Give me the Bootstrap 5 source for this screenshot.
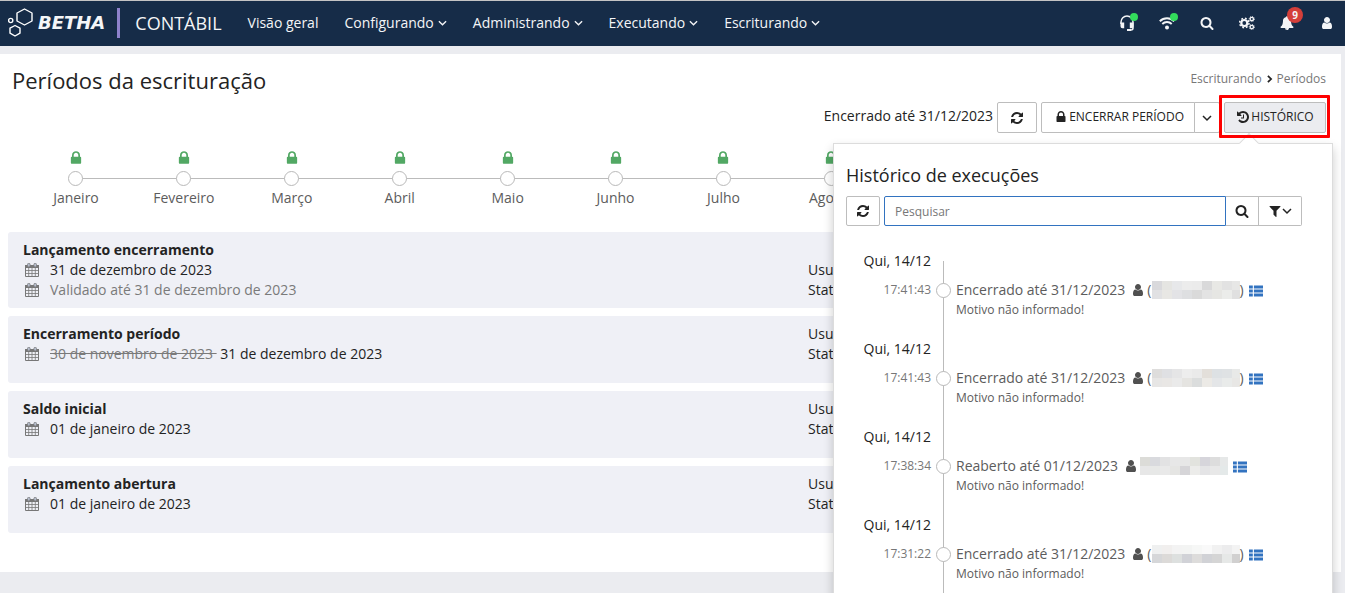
<!DOCTYPE html>
<html lang="pt-BR">
<head>
<meta charset="utf-8">
<meta name="viewport" content="width=device-width, initial-scale=1">
<title>Períodos da escrituração</title>
<link href="https://cdn.jsdelivr.net/npm/bootstrap@5.3.0/dist/css/bootstrap.min.css" rel="stylesheet">
<style>
  body { font-family: "Open Sans", "Noto Sans", sans-serif; font-size: 14px; line-height: 20px; color: #232323; background: #ebecf0; height: 100vh; overflow: hidden; }
  .ico { width: 14px; height: 14px; fill: currentColor; flex: none; display: block; }
  .topbar { background: #162c48; border-top: 1px solid #c4c4c4; height: 46px; padding-bottom: 2px; }
  .topbar a, .topbar button { color: #f4f5f7; text-decoration: none; }
  .brand-word { font-family: "DejaVu Sans", sans-serif; font-size: 18px; font-weight: 700; font-style: italic; }
  .brand-rule { width: 3px; height: 30px; background: #8e82cc; margin: 0 15px 0 12px; }
  .product { font-size: 18px; margin-right: 26px; }
  .menu { gap: 26px; }
  .tools { gap: 24px; margin-right: 10px; }
  .tool { width: 16px; height: 24px; }
  .dot { position: absolute; top: 2px; right: -3px; width: 8px; height: 8px; border-radius: 50%; background: #33dc5c; }
  .count { position: absolute; top: -4px; right: -8px; width: 16px; height: 16px; border-radius: 50%; background: #d43f3a; font-size: 10px; line-height: 16px; font-weight: 700; }
  .page { margin: 8px 4px 0 0; padding: 11px 8px 39px; }
  .page-title { font-size: 22px; line-height: 30px; font-weight: 400; margin-left: 4px; }
  .crumbs { font-size: 12px; margin: 8px 7px 0 0; gap: 3px; }
  .crumbs a { color: #777; text-decoration: none; }
  .actions { padding: 7px 7px 0 0; gap: 4px; }
  .tbtn { height: 31px; border: 1px solid #bdbdbd; border-radius: 2px; background: #fff; color: #232323; font-size: 12px; line-height: 20px; padding: 0 10px 0 12px; display: inline-flex; align-items: center; justify-content: center; gap: 1px; }
  .label { padding-bottom: 2px; }
  .sq { width: 40px; padding: 0; }
  .caret-btn { width: 26px; padding: 0; margin-left: -1px; }
  .hist { width: 102px; padding: 0 0 2px; background: #ebecf0; }
  .marker::after { content: ""; position: absolute; inset: -7px -4px -5px -5px; border: 3px solid #fe0000; border-radius: 1px; z-index: 30; pointer-events: none; }
  .months { padding: 15px 16px 24px 14px; color: #5c5c5c; }
  .month { flex: 1 1 0; min-width: 0; }
  .month .ico { width: 16px; height: 16px; margin: 2px auto; color: #52a864; }
  .step { height: 20px; }
  .step::before { content: ""; position: absolute; left: 0; right: 0; top: 10px; height: 1px; background: #bbb; }
  .month:first-child .step::before { left: 50%; }
  .month:last-child .step::before { right: 50%; }
  .ring { width: 15px; height: 15px; border: 1px solid #b9b9b9; border-radius: 50%; background: #fff; position: relative; }
  .entries { gap: 8px; }
  .entry { display: grid; grid-template-columns: 1fr 510px; background: #eff0f6; border-radius: 3px; padding: 8px 15px; min-height: 67px; }
  .entry h2 { font-size: 14px; line-height: 20px; font-weight: 700; margin: 0; }
  .when { display: flex; align-items: center; gap: 11px; }
  .when .ico { color: #777; margin-left: 2px; }
  .muted { color: #7a7a7a; }
  .history { position: absolute; top: 41px; right: -7px; width: 500px; height: 480px; background: #fff; border: 1px solid #dcdcdc; box-shadow: 0 5px 10px rgba(0,0,0,.2); z-index: 20; padding: 20px 12px; }
  .history::before { content: ""; position: absolute; top: -8px; right: 76px; width: 14px; height: 14px; background: #fff; border: solid #dcdcdc; border-width: 1px 0 0 1px; transform: rotate(45deg); }
  .history h2 { font-size: 18px; line-height: 22px; font-weight: 400; margin-bottom: 10px; }
  .finder { width: 456px; }
  .finder .tbtn { height: 30px; padding: 0; }
  .finder input { height: 30px; border: 1px solid #3273c0; border-radius: 2px 0 0 2px; font-size: 12px; padding: 0 10px; box-shadow: none; outline: 0; min-width: 0; }
  .finder input::placeholder { color: #777; }
  .w33 { width: 33px; } .w34 { width: 34px; } .w43 { width: 43px; }
  .log { margin: 25px 0 0; padding: 0; list-style: none; }
  .log li { display: grid; grid-template-columns: 85px 25px 1fr; grid-template-rows: 20px 9px 20px 20px; height: 88px; }
  .day { grid-area: 1 / 1; text-align: right; }
  .hour { grid-area: 3 / 1; text-align: right; font-size: 12px; color: #777; }
  .rail { grid-area: 1 / 2 / 5 / 3; display: flex; justify-content: center; align-items: flex-start; position: relative; height: 88px; }
  .rail::before { content: ""; position: absolute; left: 12px; top: 0; bottom: 0; width: 1px; background: #bbb; }
  .log li:first-child .rail::before { top: 10px; }
  .rail .ring { margin-top: 32px; }
  .what { grid-area: 3 / 3; color: #5c5c5c; display: flex; align-items: center; }
  .what .ico { color: #505050; margin: 0 2px 0 6px; }
  .what a .ico { color: #3273c0; margin: 2px 0 0 5px; height: 12px; }
  .why { grid-area: 4 / 3; font-size: 12px; color: #5c5c5c; }
  .mosaic { display: grid; grid-template-columns: repeat(8, 10px) 8px; grid-auto-rows: 9px; }
</style>
</head>
<body>
<svg class="d-none" xmlns="http://www.w3.org/2000/svg">
  <symbol id="lock" viewBox="0 0 1792 1792"><path d="M640 768h512v-192q0-106-75-181t-181-75-181 75-75 181v192zm832 96v576q0 40-28 68t-68 28h-960q-40 0-68-28t-28-68v-576q0-40 28-68t68-28h32v-192q0-184 132-316t316-132 316 132 132 316v192h32q40 0 68 28t28 68z"/></symbol>
  <symbol id="refresh" viewBox="0 0 1792 1792"><path d="M1639 1056q0 5-1 7-64 268-268 434.500t-478 166.500q-146 0-282.500-55t-243.500-157l-129 129q-19 19-45 19t-45-19-19-45v-448q0-26 19-45t45-19h448q26 0 45 19t19 45-19 45l-137 137q71 66 161 102t187 36q134 0 250-65t186-179q11-17 53-117 8-23 30-23h192q13 0 22.500 9.500t9.500 22.500zm25-800v448q0 26-19 45t-45 19h-448q-26 0-45-19t-19-45 19-45l138-138q-148-137-349-137-134 0-250 65t-186 179q-11 17-53 117-8 23-30 23h-199q-13 0-22.500-9.500t-9.500-22.500v-7q65-268 270-434.500t480-166.500q146 0 284 55.500t245 156.500l130-129q19-19 45-19t45 19 19 45z"/></symbol>
  <symbol id="history" viewBox="0 0 1792 1792"><path d="M1664 896q0 156-61 298t-164 245-245 164-298 61q-172 0-327-72.500t-264-204.500q-7-10-6.500-22.500t8.500-20.500l137-138q10-9 25-9 16 2 23 12 73 95 179 147t225 52q104 0 198.500-40.500t163.500-109.500 109.500-163.500 40.500-198.500-40.500-198.500-109.500-163.500-163.500-109.500-198.500-40.500q-98 0-188 35.500t-160 101.500l137 138q31 30 14 69-17 40-59 40h-448q-26 0-45-19t-19-45v-448q0-42 40-59 39-17 69 14l130 129q107-101 244.500-156.500t284.500-55.500q156 0 298 61t245 164 164 245 61 298zm-640-288v448q0 14-9 23t-23 9h-320q-14 0-23-9t-9-23v-64q0-14 9-23t23-9h224v-352q0-14 9-23t23-9h64q14 0 23 9t9 23z"/></symbol>
  <symbol id="search" viewBox="0 0 1792 1792"><path d="M1216 832q0-185-131.500-316.500t-316.500-131.500-316.500 131.500-131.500 316.500 131.500 316.500 316.500 131.500 316.500-131.500 131.500-316.500zm512 832q0 52-38 90t-90 38q-54 0-90-38l-343-342q-179 124-399 124-143 0-273.500-55.500t-225-150-150-225-55.500-273.500 55.500-273.500 150-225 225-150 273.500-55.500 273.500 55.500 225 150 150 225 55.500 273.500q0 220-124 399l343 343q37 37 37 90z"/></symbol>
  <symbol id="filter" viewBox="0 0 1792 1792"><path d="M1595 295q17 41-14 70l-493 493v742q0 42-40 59-13 5-25 5-27 0-45-19l-256-256q-19-19-19-45v-486l-493-493q-31-29-14-70 17-39 59-39h1280q42 0 59 39z"/></symbol>
  <symbol id="user" viewBox="0 0 1792 1792"><path d="M1536 1399q0 109-62.500 187t-150.500 78h-854q-88 0-150.500-78t-62.500-187q0-85 8.500-160.500t31.500-152 58.500-131 94-89 134.500-34.500q131 128 313 128t313-128q76 0 134.500 34.500t94 89 58.500 131 31.500 152 8.500 160.500zm-256-887q0 159-112.500 271.500t-271.500 112.500-271.500-112.500-112.500-271.500 112.500-271.500 271.500-112.500 271.500 112.500 112.500 271.500z"/></symbol>
  <symbol id="bell" viewBox="0 0 1792 1792"><path d="M912 1696q0-16-16-16-59 0-101.500-42.500t-42.500-101.500q0-16-16-16t-16 16q0 73 51.500 124.500t124.500 51.500q16 0 16-16zm816-288q0 52-38 90t-90 38h-448q0 106-75 181t-181 75-181-75-75-181h-448q-52 0-90-38t-38-90q50-42 91-88t85-119.500 74.500-158.500 50-206 19.500-260q0-152 117-282.500t307-158.500q-8-19-8-39 0-40 28-68t68-28 68 28 28 68q0 20-8 39 190 28 307 158.500t117 282.500q0 139 19.500 260t50 206 74.500 158.500 85 119.500 91 88z"/></symbol>
  <symbol id="down" viewBox="0 0 10 10"><path d="M1 3l4 4 4-4" fill="none" stroke="currentColor" stroke-width="1.500"/></symbol>
  <symbol id="right" viewBox="0 0 10 10"><path d="M3 1l4 4-4 4" fill="none" stroke="currentColor" stroke-width="2.200"/></symbol>
  <symbol id="list" viewBox="0 0 14 12"><path d="M0 .6h3.800v2.800H0zM4.900 .6H14v2.800H4.900zM0 4.600h3.800v2.800H0zM4.900 4.600H14v2.800H4.900zM0 8.600h3.800v2.800H0zM4.900 8.600H14v2.800H4.900z"/></symbol>
  <symbol id="calendar" viewBox="0 0 14 14"><path fill="none" stroke="currentColor" d="M.5 2.500h13v11H.5z"/><path fill="none" stroke="currentColor" stroke-width=".8" d="M3.700 4v9.500M7 4v9.500M10.300 4v9.500M.5 7.500h13M.5 10.500h13"/><path d="M0 2h14v3H0z"/><rect x="2.500" y=".3" width="2.600" height="3.700" rx="1.200" fill="#b5bccb" stroke="currentColor" stroke-width=".7"/><rect x="8.900" y=".3" width="2.600" height="3.700" rx="1.200" fill="#b5bccb" stroke="currentColor" stroke-width=".7"/></symbol>
  <symbol id="wifi" viewBox="0 0 16 14"><g fill="none" stroke="currentColor" stroke-width="1.900"><path d="M.8 5.200a10.300 10.300 0 0 1 14.400 0M3.300 8a6.700 6.700 0 0 1 9.400 0"/></g><circle cx="8" cy="11.500" r="2"/></symbol>
  <symbol id="headset" viewBox="0 0 14 16"><path d="M1 9V7a6 6 0 0 1 12 0v6q0 2-2 2H8" fill="none" stroke="currentColor" stroke-width="1.500"/><path d="M.5 7.500h3.700v5.700H2.500q-2 0-2-2zM9.800 7.500h3.700v3.700q0 2-2 2H9.800zM7 14h4v2H7z"/></symbol>
  <symbol id="cogs" viewBox="0 0 16 14"><g fill="none" stroke="currentColor"><circle cx="5.300" cy="7" r="3" stroke-width="2.200"/><circle cx="5.300" cy="7" r="4.700" stroke-width="1.500" stroke-dasharray="1.850 1.850"/><circle cx="12.800" cy="3" r="1.700" stroke-width="1.300"/><circle cx="12.800" cy="3" r="2.600" stroke-width=".9" stroke-dasharray="1 1.040"/><circle cx="12.800" cy="11" r="1.700" stroke-width="1.300"/><circle cx="12.800" cy="11" r="2.600" stroke-width=".9" stroke-dasharray="1 1.040"/></g></symbol>
</svg>

<nav class="topbar d-flex align-items-center" aria-label="Principal">
  <a href="#" class="d-flex align-items-center ps-2" aria-label="Betha">
    <svg width="26" height="30" viewBox="0 0 26 30" fill="none" stroke="#fff" stroke-width="1.400" stroke-linejoin="round"><path d="M16.500 1l7.500 4v8l-7.500 4L9 13V5zM7 17.500l5 2.700v5L7 28l-5-2.800v-5z"/><circle cx="2.700" cy="12.500" r="2.100"/></svg>
    <span class="brand-word ms-1">BETHA</span>
  </a>
  <span class="brand-rule"></span>
  <a href="#" class="product">CONTÁBIL</a>
  <div class="menu d-flex align-items-center">
    <a href="#">Visão geral</a>
    <a href="#" class="d-flex align-items-center gap-1">Configurando <svg class="ico" style="width:9px"><use href="#down"/></svg></a>
    <a href="#" class="d-flex align-items-center gap-1">Administrando <svg class="ico" style="width:9px"><use href="#down"/></svg></a>
    <a href="#" class="d-flex align-items-center gap-1">Executando <svg class="ico" style="width:9px"><use href="#down"/></svg></a>
    <a href="#" class="d-flex align-items-center gap-1">Escriturando <svg class="ico" style="width:9px"><use href="#down"/></svg></a>
  </div>
  <div class="tools d-flex align-items-center ms-auto">
    <button class="tool btn p-0 border-0 position-relative d-flex align-items-center justify-content-center" aria-label="Suporte"><svg class="ico" style="height:16px"><use href="#headset"/></svg><span class="dot"></span></button>
    <button class="tool btn p-0 border-0 position-relative d-flex align-items-center justify-content-center" aria-label="Conexão"><svg class="ico" style="width:16px"><use href="#wifi"/></svg><span class="dot"></span></button>
    <button class="tool btn p-0 border-0 d-flex align-items-center justify-content-center" aria-label="Pesquisar"><svg class="ico"><use href="#search"/></svg></button>
    <button class="tool btn p-0 border-0 d-flex align-items-center justify-content-center" aria-label="Configurações"><svg class="ico" style="width:16px"><use href="#cogs"/></svg></button>
    <button class="tool btn p-0 border-0 position-relative d-flex align-items-center justify-content-center" aria-label="Notificações"><svg class="ico"><use href="#bell"/></svg><span class="count">9</span></button>
    <button class="tool btn p-0 border-0 d-flex align-items-center justify-content-center" aria-label="Usuário"><svg class="ico"><use href="#user"/></svg></button>
  </div>
</nav>

<main class="page bg-white">
  <header class="d-flex justify-content-between align-items-start">
    <h1 class="page-title mb-0">Períodos da escrituração</h1>
    <div class="crumbs d-flex align-items-center"><a href="#" class="lh-1">Escriturando</a><svg class="ico" style="width:9px;height:8px"><use href="#right"/></svg><a href="#" class="lh-1">Períodos</a></div>
  </header>

  <div class="actions d-flex justify-content-end align-items-center">
    <span class="mb-1">Encerrado até 31/12/2023</span>
    <button class="tbtn sq" aria-label="Atualizar"><svg class="ico"><use href="#refresh"/></svg></button>
    <div class="d-flex">
      <button class="tbtn label rounded-end-0"><svg class="ico"><use href="#lock"/></svg>ENCERRAR PERÍODO</button>
      <button class="tbtn caret-btn rounded-start-0" aria-label="Mais opções"><svg class="ico" style="width:10px"><use href="#down"/></svg></button>
    </div>
    <div class="position-relative marker d-flex">
      <button class="tbtn hist"><svg class="ico"><use href="#history"/></svg>HISTÓRICO</button>
      <section class="history" aria-label="Histórico">
        <h2>Histórico de execuções</h2>
        <div class="finder d-flex">
          <button class="tbtn w34 me-1" aria-label="Atualizar histórico"><svg class="ico"><use href="#refresh"/></svg></button>
          <input class="flex-fill" type="text" placeholder="Pesquisar" aria-label="Pesquisar">
          <button class="tbtn w33 rounded-0 border-start-0" aria-label="Buscar"><svg class="ico"><use href="#search"/></svg></button>
          <button class="tbtn w43 rounded-start-0 border-start-0 gap-0" aria-label="Filtrar"><svg class="ico"><use href="#filter"/></svg><svg class="ico" style="width:10px"><use href="#down"/></svg></button>
        </div>
        <ul class="log" id="log"></ul>
      </section>
    </div>
  </div>

  <div class="months d-flex text-center" id="months"></div>

  <div class="entries d-flex flex-column">
    <article class="entry">
      <div><h2>Lançamento encerramento</h2>
        <div class="when"><svg class="ico"><use href="#calendar"/></svg>31 de dezembro de 2023</div>
        <div class="when muted"><svg class="ico"><use href="#calendar"/></svg>Validado até 31 de dezembro de 2023</div></div>
      <div class="pt-3 mt-1"><div>Usuário</div><div>Status</div></div>
    </article>
    <article class="entry">
      <div><h2>Encerramento período</h2>
        <div class="when"><svg class="ico"><use href="#calendar"/></svg><span><s class="muted">30 de novembro de 2023&nbsp;</s>&nbsp;31 de dezembro de 2023</span></div></div>
      <div><div>Usuário</div><div>Status</div></div>
    </article>
    <article class="entry">
      <div><h2>Saldo inicial</h2>
        <div class="when"><svg class="ico"><use href="#calendar"/></svg>01 de janeiro de 2023</div></div>
      <div><div>Usuário</div><div>Status</div></div>
    </article>
    <article class="entry">
      <div><h2>Lançamento abertura</h2>
        <div class="when"><svg class="ico"><use href="#calendar"/></svg>01 de janeiro de 2023</div></div>
      <div><div>Usuário</div><div>Status</div></div>
    </article>
  </div>
</main>

<script src="https://cdn.jsdelivr.net/npm/bootstrap@5.3.0/dist/js/bootstrap.bundle.min.js"></script>
<script>
  const months = ['Janeiro','Fevereiro','Março','Abril','Maio','Junho','Julho','Agosto','Setembro','Outubro','Novembro','Dezembro'];
  document.getElementById('months').innerHTML = months.map(m =>
    `<div class="month"><svg class="ico"><use href="#lock"/></svg><div class="step position-relative d-flex justify-content-center align-items-center"><span class="ring"></span></div>${m}</div>`).join('');

  // Each run: time, description, whether the name is in brackets, colours of the hidden name's tiles
  const runs = [
    ['17:41:43', 'Encerrado até 31/12/2023', true, 'd9d9dc e5e5e2 e7e8ea ececec ebebeb d9d9da e8e8e5 e2e2e2 e7e7e6 e1e1e3 e8e7e4 e3e3e6 dedfe1 dadada e3e3e3 e6e6e3 ebecea e0e0e0'],
    ['17:41:43', 'Encerrado até 31/12/2023', true, 'dedddc dfe0e3 e5e5e6 ededed eaeaea e3dfda dde1e4 dfe2e4 e8e9e8 e7e6e5 e9e7e5 eaeaea e5e4e1 dbdddd eceae6 e4e6e8 e9ebea e8e7e5'],
    ['17:38:34', 'Reaberto até 01/12/2023', false, 'dcdcd8 d9dade e2e2e3 e7e7e7 e7e7e7 e2e3de d6d5db dddddd e6e8e8 e7e7e7 e7e8e7 e9e9e9 e5e5e3 d6d5d8 ececea e4e4e6 e8e8e8 e4e9e9'],
    ['17:31:22', 'Encerrado até 31/12/2023', true, 'eff0f0 f1efee f3f3f3 f3f4f3 f6f7f6 f9f9f9 f1f1f1 ececed f3f3f3 d6d7d9 dcdad8 dde0df d1d2d7 dddcdb d1d2d6 d5d5d5 e6e8e7 d1d0d0']
  ];
  document.getElementById('log').innerHTML = runs.map(([t, text, br, tiles]) =>
    `<li><span class="day">Qui, 14/12</span><span class="hour">${t}</span><span class="rail"><span class="ring"></span></span>
     <span class="what">${text}<svg class="ico"><use href="#user"/></svg>${br ? '(' : ''}<span class="mosaic">${tiles.split(' ').map(c => `<i style="background:#${c}"></i>`).join('')}</span>${br ? ')' : ''}<a href="#" aria-label="Detalhes"><svg class="ico"><use href="#list"/></svg></a></span>
     <span class="why">Motivo não informado!</span></li>`).join('');
</script>
</body>
</html>
